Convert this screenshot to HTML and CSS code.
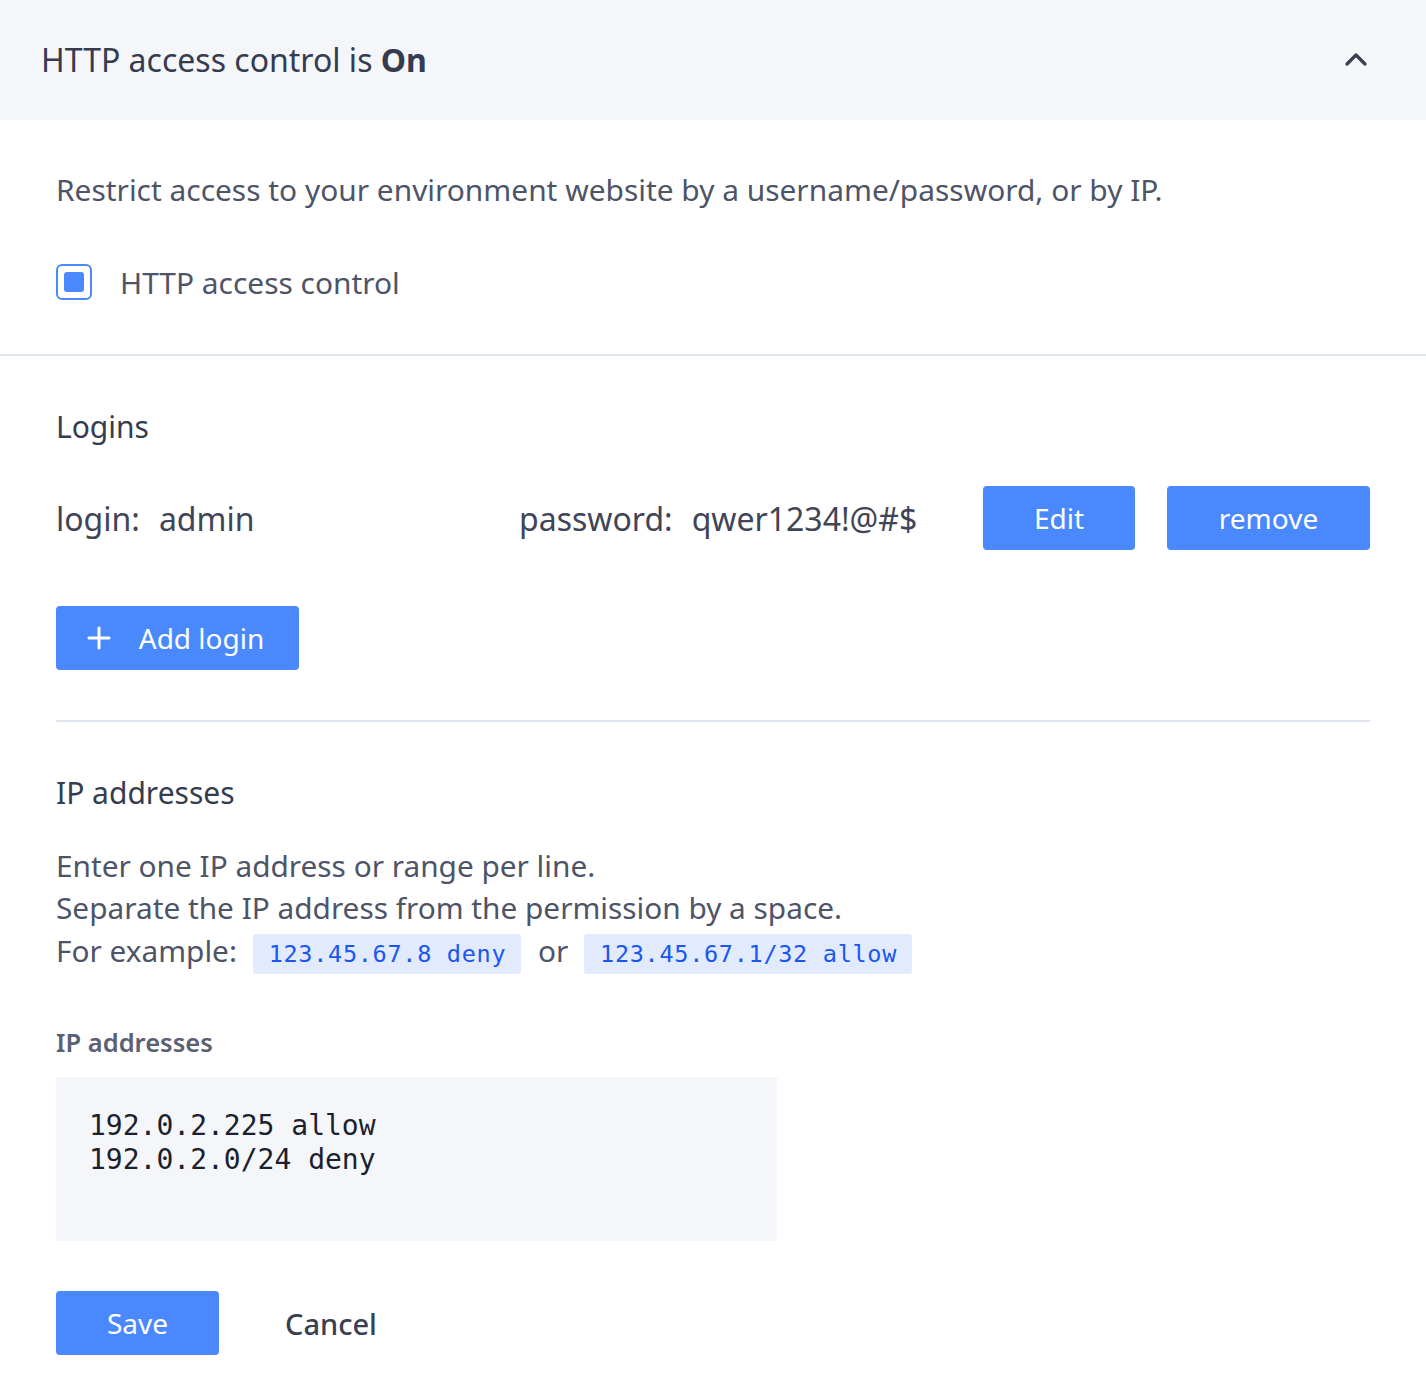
FILE: index.html
```html
<!DOCTYPE html>
<html lang="en">
<head>
<meta charset="utf-8">
<title>HTTP access control</title>
<link rel="stylesheet" href="styles.css">
</head>
<body>
<div class="panel">
  <header class="panel-header">
    <h1 class="panel-title">HTTP access control is <strong>On</strong></h1>
    <svg class="chevron" width="24" height="16" viewBox="0 0 24 16" aria-hidden="true">
      <polyline points="3,13 12,4 21,13" fill="none" stroke="#3b4055" stroke-width="3.2" stroke-linecap="round" stroke-linejoin="round"/>
    </svg>
  </header>

  <section class="intro">
    <p class="lead">Restrict access to your environment website by a username/password, or by IP.</p>
    <label class="check-row">
      <span class="checkbox"><span class="checkbox-fill"></span></span>
      <span class="check-label">HTTP access control</span>
    </label>
  </section>

  <section class="settings">
    <h2 class="section-title">Logins</h2>
    <div class="login-row">
      <div class="pair pair-login"><span class="key">login:</span><span class="val">admin</span></div>
      <div class="pair"><span class="key">password:</span><span class="val">qwer1234!@#$</span></div>
      <div class="row-actions">
        <button class="btn btn-edit">Edit</button>
        <button class="btn btn-remove">remove</button>
      </div>
    </div>
    <button class="btn btn-add">
      <svg class="plus" width="24" height="24" viewBox="0 0 24 24" aria-hidden="true">
        <path d="M12 2v20M2 12h20" stroke="#fff" stroke-width="3" stroke-linecap="round"/>
      </svg>
      <span>Add login</span>
    </button>

    <hr class="divider">

    <h2 class="section-title ip-title">IP addresses</h2>
    <div class="help">
      <p>Enter one IP address or range per line.</p>
      <p>Separate the IP address from the permission by a space.</p>
      <p class="example">For example: <code class="chip">123.45.67.8 deny</code> or <code class="chip">123.45.67.1/32 allow</code></p>
    </div>

    <div class="field-label">IP addresses</div>
    <div class="textarea">192.0.2.225 allow
192.0.2.0/24 deny</div>

    <div class="form-actions">
      <button class="btn btn-save">Save</button>
      <button class="btn-link">Cancel</button>
    </div>
  </section>
</div>
</body>
</html>
```

FILE: styles.css
```css
* { box-sizing: border-box; }
html, body { margin: 0; padding: 0; background: #ffffff; }
body {
  font-family: "Noto Sans", "Open Sans", sans-serif;
  color: #3d4355;
}
.panel { width: 1426px; }

.panel-header {
  height: 120px;
  background: #f5f6fa;
  display: flex;
  align-items: center;
  justify-content: space-between;
  padding: 0 58px 0 41px;
}
.panel-title {
  margin: 0;
  font-size: 32px;
  font-weight: 400;
  color: #353c4f;
  line-height: 40px;
}
.panel-title strong { font-weight: 700; }
.chevron { display: block; margin-top: -2px; }

.intro {
  padding: 52px 56px 54px;
  border-bottom: 2px solid #dfe5ee;
}
.lead {
  margin: 0;
  font-size: 29.9px;
  line-height: 36px;
  color: #4e5467;
}
.check-row {
  display: flex;
  align-items: center;
  margin-top: 56px;
  height: 36px;
}
.checkbox {
  width: 36px;
  height: 36px;
  border: 2px solid #4a88fd;
  border-radius: 6px;
  display: flex;
  align-items: center;
  justify-content: center;
}
.checkbox-fill {
  width: 20px;
  height: 20px;
  background: #4a88fd;
  border-radius: 3px;
}
.check-label {
  margin-left: 28px;
  font-size: 29.9px;
  color: #4e5467;
}

.settings { padding: 53px 56px 40px; }
.section-title {
  margin: 0;
  font-size: 30px;
  font-weight: 400;
  line-height: 36px;
  color: #353c4f;
}
.login-row {
  display: flex;
  align-items: center;
  margin-top: 41px;
  height: 64px;
}
.pair { display: flex; font-size: 32px; color: #3f4557; }
.pair .key { margin-right: 19px; }
.pair-login { width: 463px; }
.row-actions { margin-left: auto; display: flex; gap: 32px; }

.btn {
  border: none;
  background: #4a88fd;
  color: #ffffff;
  font-family: inherit;
  font-size: 28px;
  height: 64px;
  border-radius: 4px;
  padding: 0;
  cursor: pointer;
  display: inline-flex;
  align-items: center;
  justify-content: center;
}
.btn-edit { width: 152px; }
.btn-remove { width: 203px; }
.btn-add {
  margin-top: 56px;
  width: 243px;
  gap: 28px;
  padding-right: 4px;
}
.plus { display: block; }

.divider {
  margin: 50px 0 0;
  border: none;
  border-top: 2px solid #dfe5ee;
}
.ip-title { margin-top: 53px; }

.help {
  margin-top: 34px;
  font-size: 29.8px;
  color: #4e5467;
}
.help p { margin: 0; line-height: 42px; }
.help .example { line-height: 44px; }
.chip {
  display: inline-block;
  font-family: "DejaVu Sans Mono", monospace;
  font-size: 23.5px;
  letter-spacing: 0.7px;
  color: #1a56f0;
  background: #e2eafd;
  border-radius: 3px;
  line-height: 40px;
  padding: 0 15px 0 16px;
  margin: 0 9px 0 8px;
  vertical-align: middle;
  position: relative;
  top: 0px;
}

.field-label {
  margin-top: 51px;
  font-size: 25.5px;
  font-weight: 600;
  color: #5b6072;
  line-height: 34px;
}
.textarea {
  margin-top: 18px;
  width: 721px;
  height: 164px;
  background: #f5f6fa;
  padding: 32px 33px;
  font-family: "DejaVu Sans Mono", monospace;
  font-size: 28px;
  line-height: 34px;
  color: #1c1f2e;
  white-space: pre;
}

.form-actions {
  margin-top: 50px;
  display: flex;
  align-items: center;
}
.btn-save { width: 163px; }
.btn-link {
  border: none;
  background: transparent;
  font-family: inherit;
  font-size: 29px;
  font-weight: 500;
  color: #3a4054;
  margin-left: 66px;
  padding: 0;
  cursor: pointer;
}
```
